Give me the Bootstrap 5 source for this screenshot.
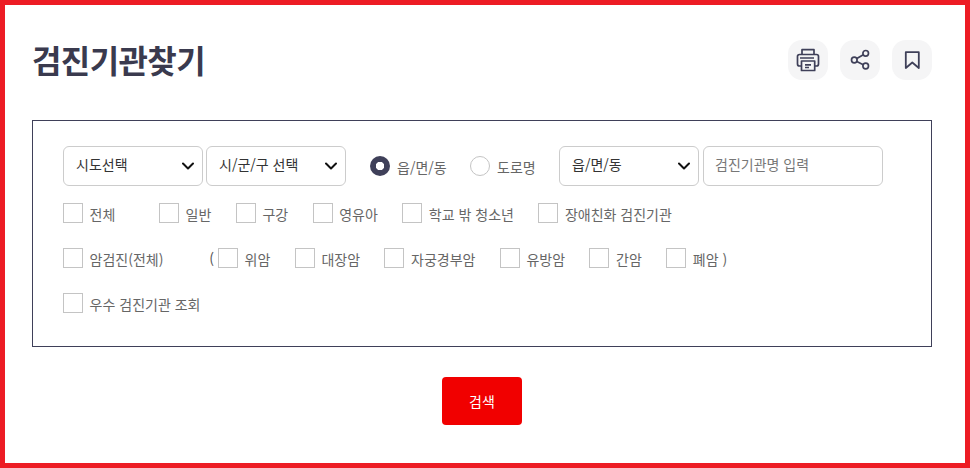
<!DOCTYPE html>
<html lang="ko">
<head>
  <meta charset="utf-8">
  <meta name="viewport" content="width=device-width, initial-scale=1">
  <title>검진기관찾기</title>
  <link href="https://cdn.jsdelivr.net/npm/bootstrap@5.3.2/dist/css/bootstrap.min.css" rel="stylesheet">
  <style>
    html, body { height: 100%; }
    body {
      font-family: "Noto Sans CJK KR", "Noto Sans", sans-serif;
      font-size: 14px;
      color: #666;
      background: #fff;
    }
    .page-frame {
      height: 468px;
      border: 5px solid #ed1c24;
      padding: 35px 33px 0 27px;
      overflow: hidden;
    }
    .page-title {
      font-size: 32px;
      line-height: 38px;
      font-weight: 700;
      letter-spacing: -.6px;
      color: #3a3a4e;
      margin: 0 0 2px;
    }
    .tool-group { gap: 12px; }
    .tool-btn {
      width: 40px;
      height: 40px;
      padding: 0;
      border: 0;
      border-radius: 14px;
      background: #f5f5f6;
    }
    .search-box {
      height: 227px;
      margin-top: 40px;
      padding: 25px 30px 0;
      border: 1px solid #3f4059;
    }
    .search-box .form-select,
    .search-box .form-control {
      height: 40px;
      font-size: 14px;
      color: #333;
      border: 1px solid #ccc;
      border-radius: 6px;
      box-shadow: none;
    }
    .search-box .form-select {
      width: 140px;
      padding: 0 30px 4px 12px;
      background-image: url("data:image/svg+xml,%3csvg xmlns='http://www.w3.org/2000/svg' viewBox='0 0 12 8'%3e%3cpath fill='none' stroke='%23111' stroke-width='2' stroke-linecap='round' stroke-linejoin='round' d='M1 1.5l5 5 5-5'/%3e%3c/svg%3e");
      background-position: right 8px center;
      background-size: 12px 8px;
    }
    .search-box .form-control {
      width: 180px;
      margin-left: 4px;
      padding: 0 11px 4px;
    }
    .search-box .form-control::placeholder { color: #777; }
    .select-second { margin-left: 3px; }
    .radio-one { margin-left: 24px; width: 100px; }
    .radio-two { width: 89px; }
    .search-row { height: 20px; }
    .row-one { margin-top: 17px; }
    .row-two, .row-three { margin-top: 25px; }
    .check-item { margin-right: 24px; line-height: 20px; }
    .check-item .form-check-input,
    .radio-item .form-check-input {
      width: 20px;
      height: 20px;
      margin: 0 7px 0 0;
      flex: none;
      border: 1px solid #c4c4c4;
      background-color: #fff;
      box-shadow: none;
    }
    .check-item .form-check-input { border-radius: 0; }
    .check-item label, .radio-item label { position: relative; top: 1px; left: -.4px; }
    .radio-item label { left: 0; }
    .radio-item .form-check-input:checked {
      border: 0;
      background: #3f4059;
      background-image: radial-gradient(circle, #fff 0 4px, #3f4059 4.5px);
    }
    .label-first { width: 45px; }
    .item-cancer { width: 123px; margin-right: 0; }
    .paren { width: 28px; color: #555; }
    .after-paren { margin-left: 4px; }
    .submit-btn {
      width: 80px;
      height: 48px;
      margin-top: 30px;
      padding: 0;
      font-size: 14px;
      color: #fff;
      background: #f10000;
      border: 0;
      border-radius: 4px;
    }
  </style>
</head>
<body>
  <div class="page-frame">
    <div class="d-flex justify-content-between align-items-center">
      <h1 class="page-title">검진기관찾기</h1>
      <div class="d-flex tool-group">
        <button type="button" class="btn tool-btn d-flex align-items-center justify-content-center" aria-label="인쇄">
          <svg width="24" height="24" viewBox="0 0 24 24" fill="none" stroke="#3f4059" stroke-width="1.7" stroke-linejoin="round">
            <path d="M6 6.500V1.700h12v4.800"/>
            <path d="M5.500 18H3.500a2 2 0 0 1-2-2V8.500a2 2 0 0 1 2-2h17a2 2 0 0 1 2 2V16a2 2 0 0 1-2 2h-1.800"/>
            <path d="M5.500 13h13.200v9.500H5.500z"/>
            <path d="M4 10h14M9 16.800h6M9 19.500h4"/>
          </svg>
        </button>
        <button type="button" class="btn tool-btn d-flex align-items-center justify-content-center" aria-label="공유">
          <svg width="24" height="24" viewBox="0 0 24 24" fill="none" stroke="#3f4059" stroke-width="1.7">
            <circle cx="17.700" cy="5.300" r="2.800"/>
            <circle cx="6.300" cy="12" r="2.800"/>
            <circle cx="17.700" cy="18" r="2.800"/>
            <path d="M8.800 10.600l6.500-3.900M8.800 13.400l6.500 3.300"/>
          </svg>
        </button>
        <button type="button" class="btn tool-btn d-flex align-items-center justify-content-center" aria-label="북마크">
          <svg width="24" height="24" viewBox="0 0 24 24" fill="none" stroke="#3f4059" stroke-width="1.800" stroke-linejoin="round">
            <path d="M5.800 4.200h13V20l-6.500-5.500-6.500 5.500z"/>
          </svg>
        </button>
      </div>
    </div>

    <form class="search-box">
      <div class="d-flex align-items-center">
        <select class="form-select" aria-label="시도"><option>시도선택</option></select>
        <select class="form-select select-second" aria-label="시군구"><option>시/군/구 선택</option></select>
        <div class="radio-item d-flex align-items-center radio-one">
          <input class="form-check-input" type="radio" name="addr" id="addr1" checked>
          <label for="addr1">읍/면/동</label>
        </div>
        <div class="radio-item d-flex align-items-center radio-two">
          <input class="form-check-input" type="radio" name="addr" id="addr2">
          <label for="addr2">도로명</label>
        </div>
        <select class="form-select" aria-label="읍면동"><option>읍/면/동</option></select>
        <input type="text" class="form-control" placeholder="검진기관명 입력">
      </div>

      <div class="d-flex align-items-center search-row row-one">
        <div class="check-item d-flex"><input class="form-check-input" type="checkbox" id="c1"><label class="label-first" for="c1">전체</label></div>
        <div class="check-item d-flex"><input class="form-check-input" type="checkbox" id="c2"><label for="c2">일반</label></div>
        <div class="check-item d-flex"><input class="form-check-input" type="checkbox" id="c3"><label for="c3">구강</label></div>
        <div class="check-item d-flex"><input class="form-check-input" type="checkbox" id="c4"><label for="c4">영유아</label></div>
        <div class="check-item d-flex"><input class="form-check-input" type="checkbox" id="c5"><label for="c5">학교 밖 청소년</label></div>
        <div class="check-item d-flex"><input class="form-check-input" type="checkbox" id="c6"><label for="c6">장애친화 검진기관</label></div>
      </div>

      <div class="d-flex align-items-center search-row row-two">
        <div class="check-item item-cancer d-flex"><input class="form-check-input" type="checkbox" id="c7"><label for="c7">암검진(전체)</label></div>
        <span class="paren text-end">(</span>
        <div class="check-item d-flex after-paren"><input class="form-check-input" type="checkbox" id="c8"><label for="c8">위암</label></div>
        <div class="check-item d-flex"><input class="form-check-input" type="checkbox" id="c9"><label for="c9">대장암</label></div>
        <div class="check-item d-flex"><input class="form-check-input" type="checkbox" id="c10"><label for="c10">자궁경부암</label></div>
        <div class="check-item d-flex"><input class="form-check-input" type="checkbox" id="c11"><label for="c11">유방암</label></div>
        <div class="check-item d-flex"><input class="form-check-input" type="checkbox" id="c12"><label for="c12">간암</label></div>
        <div class="check-item d-flex"><input class="form-check-input" type="checkbox" id="c13"><label for="c13">폐암 )</label></div>
      </div>

      <div class="d-flex align-items-center search-row row-three">
        <div class="check-item d-flex"><input class="form-check-input" type="checkbox" id="c14"><label for="c14">우수 검진기관 조회</label></div>
      </div>
    </form>

    <div class="d-flex justify-content-center">
      <button type="button" class="btn submit-btn">검색</button>
    </div>
  </div>
  <script src="https://cdn.jsdelivr.net/npm/bootstrap@5.3.2/dist/js/bootstrap.bundle.min.js"></script>
</body>
</html>
